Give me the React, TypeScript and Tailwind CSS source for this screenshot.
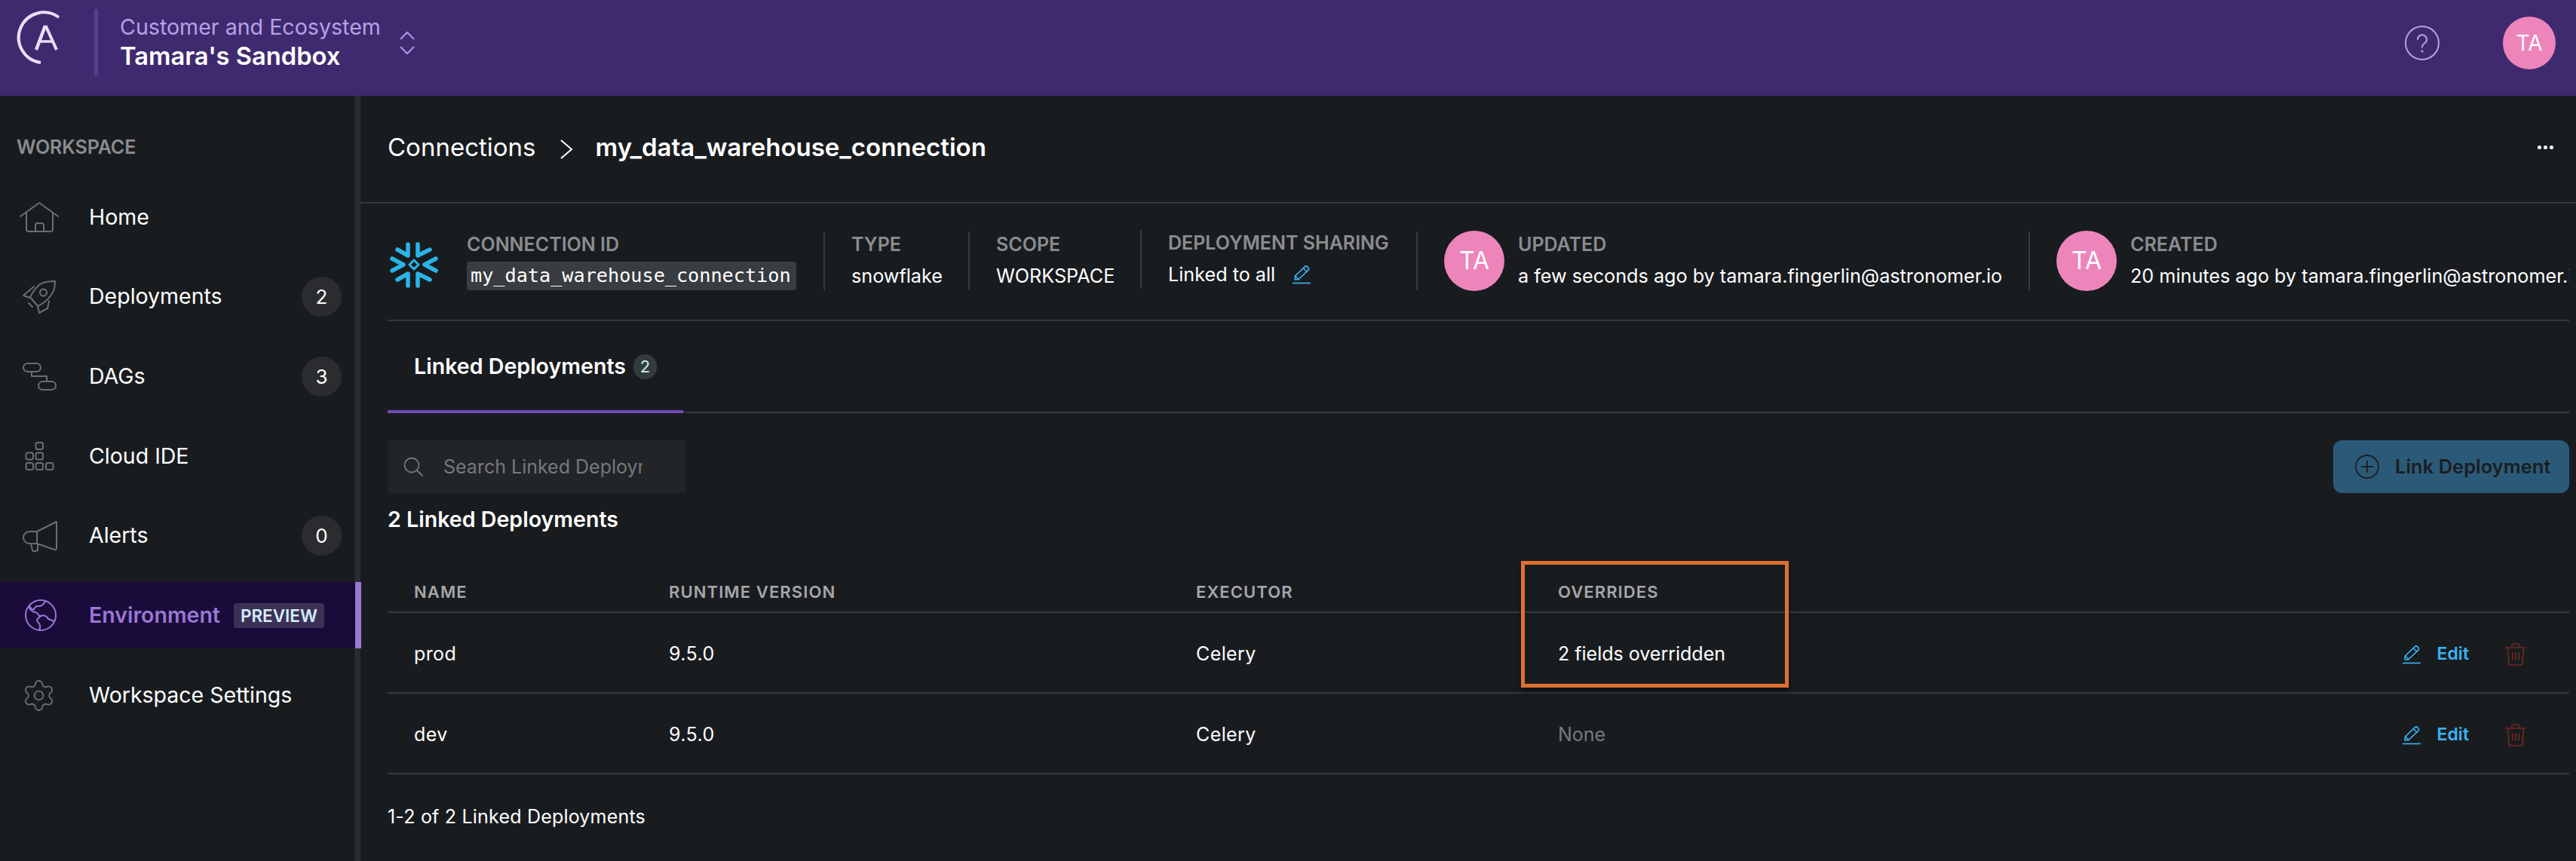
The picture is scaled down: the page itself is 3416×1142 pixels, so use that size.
import React from 'react';
import { Settings } from 'lucide-react';

const Logo = () => (
  <svg width="120" height="95" viewBox="0 0 120 95" className="shrink-0" fill="none">
    <path d="M63 18 A33.4 33.4 0 1 0 39 78" stroke="#e8e0f7" strokeWidth="4" strokeLinecap="butt" />
    <path d="M45 29 L33 61" stroke="#e8e0f7" strokeWidth="4.5" />
    <path d="M45.5 29 L60 61" stroke="#e8e0f7" strokeWidth="4" />
    <path d="M39 50 H56" stroke="#e8e0f7" strokeWidth="3.5" />
  </svg>
);

const HomeIcon = () => (
  <svg width="60" height="60" viewBox="0 0 60 60" fill="none" stroke="#6b6d70" strokeWidth="2" strokeLinecap="round" strokeLinejoin="round">
    <path d="M5 29 L30 11 L55 29" />
    <path d="M13 24 V46 a3 3 0 0 0 3 3 H45 a3 3 0 0 0 3 -3 V24" />
    <path d="M25 49 V41 a3 3 0 0 1 3 -3 h5 a3 3 0 0 1 3 3 v8" />
  </svg>
);

const RocketIcon = () => (
  <svg width="60" height="60" viewBox="0 0 60 60" fill="none" stroke="#6b6d70" strokeWidth="2" strokeLinecap="round" strokeLinejoin="round">
    <path d="M51 9 C42 9 36 10 31 13 C26 17 21 24 18 30 L28 42 C35 39 42 33 46 27 C50 22 51 15 51 9 Z" />
    <circle cx="35.5" cy="24" r="4.5" />
    <path d="M23 16 L9 28 L18 31" />
    <path d="M43 35 L41 45 L30 51 L28 42" />
    <path d="M16 38 L21 43" />
  </svg>
);

const DagIcon = () => (
  <svg width="60" height="60" viewBox="0 0 60 60" fill="none" stroke="#6b6d70" strokeWidth="2" strokeLinecap="round" strokeLinejoin="round">
    <rect x="9" y="13" width="23" height="11" rx="5.5" />
    <rect x="29" y="37" width="23" height="11" rx="5.5" />
    <path d="M20 24 V30 H40 V37" />
  </svg>
);

const IdeIcon = () => (
  <svg width="60" height="60" viewBox="0 0 60 60" fill="none" stroke="#6b6d70" strokeWidth="2">
    <rect x="25.5" y="12" width="9.5" height="9" rx="2.5" />
    <rect x="12.5" y="25.5" width="9.5" height="9" rx="2.5" />
    <rect x="25.5" y="25.5" width="9.5" height="9" rx="2.5" />
    <rect x="12.5" y="39" width="9.5" height="9" rx="2.5" />
    <rect x="25.5" y="39" width="9.5" height="9" rx="2.5" />
    <rect x="39" y="39" width="9.5" height="9" rx="2.5" />
  </svg>
);

const AlertIcon = () => (
  <svg width="60" height="60" viewBox="0 0 60 60" fill="none" stroke="#6b6d70" strokeWidth="2" strokeLinecap="round" strokeLinejoin="round">
    <path d="M53 11 L27 24 H17 a8 8 0 0 0 0 16 H27 L50 48 a2 2 0 0 0 3 -1.5 Z" />
    <path d="M27 24 V40" />
    <path d="M19 40 L21 49 a3 3 0 0 0 4 1 l3 -1 V41" />
  </svg>
);

const GlobeIcon = () => (
  <svg width="60" height="60" viewBox="0 0 60 60" fill="none" stroke="#9b77d6" strokeWidth="2" strokeLinecap="round" strokeLinejoin="round">
    <circle cx="32" cy="30" r="20" />
    <path d="M38 11 C37 15 33 18 30 18 C26 17 24 20 23 22 C21 23 19 22 17 17" />
    <path d="M17 20 C19 26 24 25 27 27 C30 29 29 32 32 31 C37 29 41 32 42 35 L50 38" />
    <path d="M32 31 C29 34 25 36 28 39 C31 41 32 45 30 50" />
  </svg>
);

const PencilIcon = ({ className }: { className: string }) => (
  <svg viewBox="0 0 26 26" fill="none" stroke="#38b6f5" strokeWidth="1.6" strokeLinecap="round" strokeLinejoin="round" className={className}>
    <path d="M4 20 L4.5 15 L17.5 2.6 a2 2 0 0 1 3 0 l1.5 1.5 a2 2 0 0 1 0 3 L9 19.5 Z" />
    <path d="M4.5 15 L9 19.5" />
    <path d="M15.5 4.8 L20 9.2" />
    <path d="M1 24.5 H25" strokeLinecap="butt" />
  </svg>
);

const TrashIcon = () => (
  <svg width="28" height="30" viewBox="0 0 28 30" fill="none" stroke="#6d2724" strokeWidth="1.7" strokeLinecap="round" strokeLinejoin="round">
    <path d="M1 6 H27" />
    <path d="M9 6 V3 a2 2 0 0 1 2 -2 h6 a2 2 0 0 1 2 2 V6" />
    <path d="M3.5 6 L5 27 a2 2 0 0 0 2 2 H21 a2 2 0 0 0 2 -2 L24.5 6" />
    <path d="M10 13 V22 M14 13 V22 M18 13 V22" />
  </svg>
);

const Snowflake = () => (
  <svg width="80" height="80" viewBox="0 0 80 80" className="shrink-0 ml-[-4px] mr-[29px] mt-[10px]" fill="none" stroke="#29b5e8" strokeWidth="5.5" strokeLinecap="round" strokeLinejoin="round">
    <path d="M31 13 V28 L17 20" />
    <path d="M44 13 V28 L60 20" />
    <path d="M10 32 L25 40 L10 48" />
    <path d="M68 32 L53 40 L68 48" />
    <path d="M31 68 V52 L17 60" />
    <path d="M44 68 V52 L60 60" />
    <path d="M39 34 L45 40 L39 46 L33 40 Z" strokeWidth="3" />
  </svg>
);

const navItems = [
  { label: 'Home', icon: <HomeIcon /> },
  { label: 'Deployments', icon: <RocketIcon />, count: 2 },
  { label: 'DAGs', icon: <DagIcon />, count: 3 },
  { label: 'Cloud IDE', icon: <IdeIcon /> },
  { label: 'Alerts', icon: <AlertIcon />, count: 0 },
  { label: 'Environment', icon: <GlobeIcon />, active: true },
  {
    label: 'Workspace Settings',
    icon: <Settings size={47} strokeWidth={1} color="#6b6d70" className="ml-[6px]" />,
  },
];

const Sidebar = () => (
  <aside className="w-[478px] shrink-0 border-r-8 border-[#2b2c30] pt-[51px]">
    <div className="pl-[22px] text-[25px] leading-[34px] font-semibold text-[#8b8d90] tracking-[-0.1px]">WORKSPACE</div>
    <nav className="mt-[32px] flex flex-col gap-[17.7px]">
      {navItems.map((item) =>
        item.active ? (
          <div key={item.label} className="relative flex h-[88px] items-center bg-[#1a0c3a] border-r-8 border-[#9b77d6] mr-[-9px] pl-[22px]">
            <span className="w-[60px] shrink-0">{item.icon}</span>
            <span className="ml-[36px] text-[28.5px] font-semibold text-[#9b77d6]">{item.label}</span>
            <span className="ml-[18px] flex h-[33px] items-center rounded-[4px] bg-[#3c3057] px-[9px] text-[22.5px] font-semibold text-[#d3ecf8]">PREVIEW</span>
          </div>
        ) : (
          <div key={item.label} className="flex h-[88px] items-center pl-[22px] pr-[17px]">
            <span className="flex w-[60px] shrink-0 items-center">{item.icon}</span>
            <span className="ml-[36px] flex-1 text-[28.5px] text-white">{item.label}</span>
            {item.count !== undefined && (
              <span className="flex h-[53px] w-[53px] items-center justify-center rounded-full bg-[#2b2c30] text-[26px] text-white">{item.count}</span>
            )}
          </div>
        )
      )}
    </nav>
  </aside>
);

const Label = ({ children }: { children: React.ReactNode }) => (
  <div className="whitespace-nowrap text-[25px] leading-[34px] font-semibold text-[#8b8d90]">{children}</div>
);

const Value = ({ children }: { children: React.ReactNode }) => (
  <div className="whitespace-nowrap text-[25.2px] leading-[38px] text-white">{children}</div>
);

const Meta = ({ label, width, children }: { label: string; width: string; children: React.ReactNode }) => (
  <div className={`flex h-[78px] shrink-0 flex-col justify-between border-l-2 border-[#37383c] pl-[35px] ${width}`}>
    <Label>{label}</Label>
    {children}
  </div>
);

const Person = ({ label, value, width }: { label: string; value: string; width: string }) => (
  <div className={`flex h-[78px] shrink-0 items-center gap-[18px] border-l-2 border-[#37383c] pl-[35px] ${width}`}>
    <div className="flex h-[80px] w-[80px] shrink-0 items-center justify-center rounded-full bg-[#ed85bb] text-[32px] text-white">TA</div>
    <div className="flex flex-col gap-[6px]">
      <Label>{label}</Label>
      <Value>{value}</Value>
    </div>
  </div>
);

const rows = [
  { name: 'prod', overrides: '2 fields overridden', none: false },
  { name: 'dev', overrides: 'None', none: true },
];

const cols = 'grid grid-cols-[338px_699px_480px_1fr_auto] items-center pl-[35px] pr-[57px]';

const Table = () => (
  <div className="mt-[46px]">
    <div className={`${cols} h-[58px] border-b-2 border-[#37383c] pt-[5px] text-[22px] font-semibold tracking-[1.1px] text-[#a5a7aa]`}>
      <div>NAME</div>
      <div>RUNTIME VERSION</div>
      <div>EXECUTOR</div>
      <div>OVERRIDES</div>
      <div />
    </div>
    {rows.map((row) => (
      <div key={row.name} className={`${cols} h-[107px] border-b-2 border-[#37383c] pt-[4px] text-[25px] tracking-[0.4px] text-white`}>
        <div>{row.name}</div>
        <div>9.5.0</div>
        <div>Celery</div>
        <div className={row.none ? 'tracking-normal text-[#77797c]' : 'tracking-normal'}>{row.overrides}</div>
        <div className="flex items-center">
          <PencilIcon className="h-[26px] w-[26px]" />
          <span className="ml-[21px] text-[23px] font-semibold tracking-normal text-[#38b6f5]">Edit</span>
          <span className="ml-[48px] flex"><TrashIcon /></span>
        </div>
      </div>
    ))}
  </div>
);

const App = () => {
  return (
    <div className="relative flex h-[1142px] w-[3416px] flex-col overflow-hidden bg-[#191c1f] font-['Inter',sans-serif]">
      <header className="flex h-[127px] shrink-0 items-center bg-[#3f2a70]">
        <div className="ml-[15px] mb-[22px] flex"><Logo /></div>
        <div className="mb-[16px] ml-[-10px] h-[88px] w-[5px] bg-[#55408c]" />
        <div className="ml-[29px] mb-[18px]">
          <div className="text-[28.6px] leading-[38px] text-[#b6a1e6]">Customer and Ecosystem</div>
          <div className="text-[32.7px] leading-[38px] font-semibold text-white">Tamara's Sandbox</div>
        </div>
        <svg width="20" height="30" viewBox="0 0 20 30" fill="none" stroke="#a78fdc" strokeWidth="2.4" className="ml-[25px] mb-[14px]">
          <path d="M1 10 L10 1 L19 10" />
          <path d="M1 20 L10 29 L19 20" />
        </svg>
        <div className="ml-auto flex items-start gap-[84px] pr-[27px]">
          <svg width="46" height="46" viewBox="0 0 46 46" fill="none" stroke="#b6a1e6" strokeWidth="2" strokeLinecap="round" className="mt-[12px]">
            <circle cx="23" cy="23" r="22" />
            <path d="M17 18 a6 6 0 1 1 9 5.5 c-2 1.2 -3 2.5 -3 5" />
            <circle cx="23" cy="34" r="0.6" />
          </svg>
          <div className="mb-[14px] flex h-[70px] w-[70px] items-center justify-center rounded-full bg-[#ed85bb] text-[28px] text-white">TA</div>
        </div>
      </header>

      <div className="flex min-h-0 flex-1">
        <Sidebar />
        <main className="min-w-0 flex-1">
          <div className="flex h-[143px] items-center border-b-2 border-[#37383c] pb-[4px] pl-[36px] pr-[30px]">
            <span className="text-[33px] text-white">Connections</span>
            <svg width="18" height="28" viewBox="0 0 18 28" fill="none" stroke="#ffffff" strokeWidth="2" className="ml-[32px] mt-[4px]">
              <path d="M2 2 L16 14 L2 26" />
            </svg>
            <span className="ml-[29px] text-[33px] font-semibold text-white">my_data_warehouse_connection</span>
            <div className="ml-auto flex gap-[3px]">
              <span className="h-[5px] w-[5px] rounded-full bg-white" />
              <span className="h-[5px] w-[5px] rounded-full bg-white" />
              <span className="h-[5px] w-[5px] rounded-full bg-white" />
            </div>
          </div>

          <div className="pl-[36px] pr-[9px]">
            <div className="flex h-[156px] items-center overflow-hidden border-b-2 border-[#37383c] pb-[3px]">
              <Snowflake />
              <div className="flex h-[78px] w-[473px] shrink-0 flex-col items-start justify-between">
                <Label>CONNECTION ID</Label>
                <code className="rounded-[4px] bg-[#393c40] pl-[5px] pr-[7px] text-[25.2px] leading-[38px] whitespace-nowrap text-white font-['DejaVu_Sans_Mono',monospace]">my_data_warehouse_connection</code>
              </div>
              <Meta label="TYPE" width="w-[192px]"><Value>snowflake</Value></Meta>
              <Meta label="SCOPE" width="w-[228px]"><Value>WORKSPACE</Value></Meta>
              <Meta label="DEPLOYMENT SHARING" width="w-[366px] mt-[-4px]">
                <div className="flex items-center gap-[22px]">
                  <Value>Linked to all</Value>
                  <PencilIcon className="h-[26px] w-[26px]" />
                </div>
              </Meta>
              <Person label="UPDATED" value="a few seconds ago by tamara.fingerlin@astronomer.io" width="w-[812px]" />
              <Person label="CREATED" value="20 minutes ago by tamara.fingerlin@astronomer.io" width="w-[760px]" />
            </div>

            <div className="flex h-[122px] items-start border-b-2 border-[#37383c]">
              <div className="flex h-[122px] w-[392px] items-center gap-[10px] border-b-4 border-[#6f4bb5] pl-[35px] pt-[3px]">
                <span className="text-[28.6px] font-semibold text-white">Linked Deployments</span>
                <span className="flex h-[33px] w-[31px] items-center justify-center rounded-full bg-[#343b3d] text-[22px] text-[#c5eee6]">2</span>
              </div>
            </div>

            <div className="mt-[36px] flex items-center justify-between">
              <div className="flex h-[70px] w-[396px] items-center overflow-hidden rounded-[4px] bg-[#212528] pl-[21px]">
                <svg width="26" height="26" viewBox="0 0 26 26" fill="none" stroke="#77797c" strokeWidth="1.8" strokeLinecap="round" className="shrink-0">
                  <circle cx="11" cy="11" r="9.5" />
                  <path d="M18 18 L25 25" />
                </svg>
                <div className="ml-[27px] w-[264px] overflow-hidden whitespace-nowrap pt-[2px] text-[25px] text-[#77797c]">Search Linked Deployments</div>
              </div>
              <button className="flex h-[70px] w-[313px] items-center rounded-[12px] bg-[#2b5a79] pl-[29px]">
                <svg width="32" height="32" viewBox="0 0 32 32" fill="none" stroke="#1a1e22" strokeWidth="1.8">
                  <circle cx="16" cy="16" r="15" />
                  <path d="M16 8 V24 M8 16 H24" />
                </svg>
                <span className="ml-[21px] text-[25.5px] font-semibold text-[#1a1e22]">Link Deployment</span>
              </button>
            </div>

            <div className="mt-[15px] text-[28.6px] leading-[40px] font-semibold text-white">2 Linked Deployments</div>

            <Table />

            <div className="mt-[36px] text-[25px] leading-[40px] tracking-[0.2px] text-white">1-2 of 2 Linked Deployments</div>
          </div>
        </main>
      </div>

      {/* annotation drawn on top of the screenshot */}
      <div className="absolute left-[2017px] top-[744px] h-[168px] w-[355px] border-[5px] border-[#e0702f] shadow-[0_4px_8px_rgba(0,0,0,0.5)]" />
    </div>
  );
};

export default App;
